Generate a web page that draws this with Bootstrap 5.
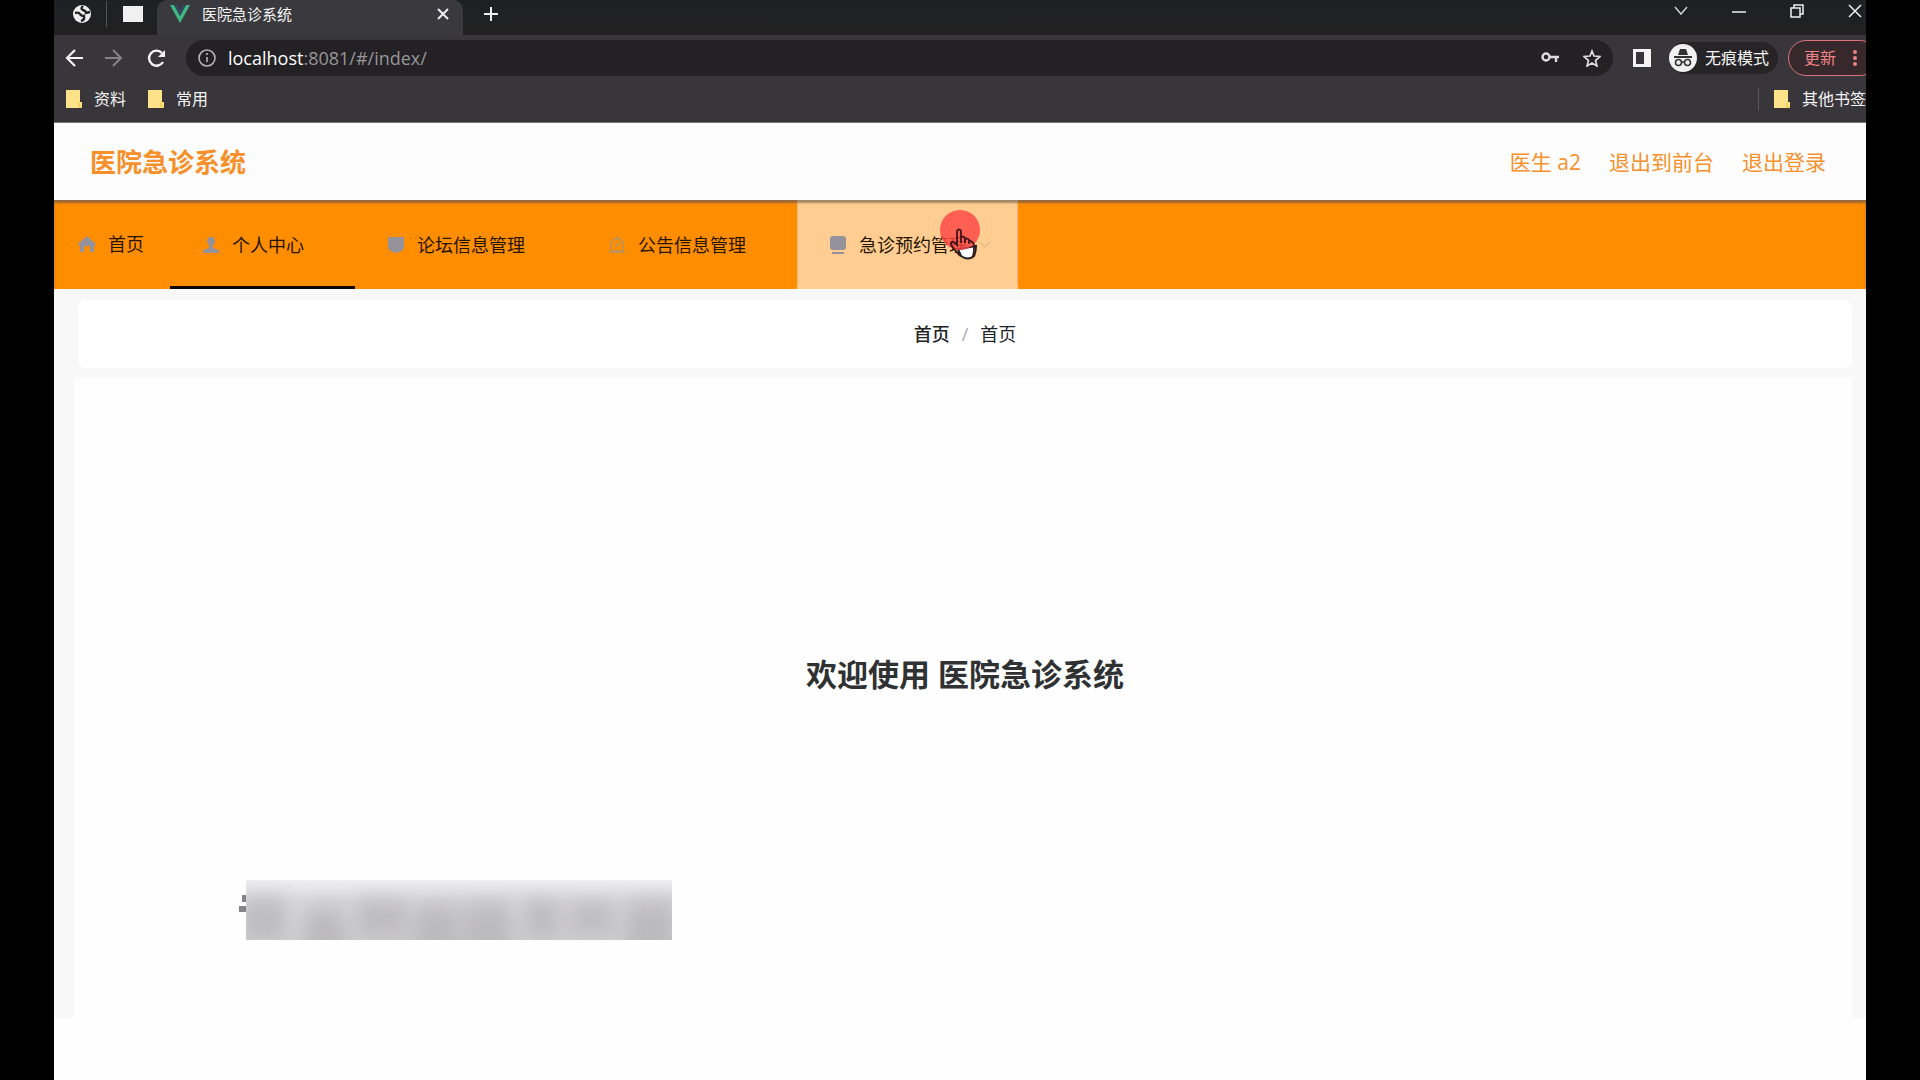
<!DOCTYPE html>
<html lang="zh-CN">
<head>
<meta charset="utf-8">
<meta name="viewport" content="width=device-width, initial-scale=1">
<title>医院急诊系统</title>
<link href="https://cdn.jsdelivr.net/npm/bootstrap@5.3.0/dist/css/bootstrap.min.css" rel="stylesheet">
<style>
body{background:#000;font-family:"Open Sans","Noto Sans CJK SC",sans-serif;font-size:18px;line-height:24px;color:#222}
a{text-decoration:none;color:inherit}
svg{display:block;flex:none}
button{background:none;border:0;padding:0;color:inherit}
.screen{margin:0 54px;background:#fefefe;min-height:100vh}
.chrome{background:#38363a;color:#f4f4f4;font-size:16px;line-height:20px;border-bottom:1px solid #777}
.tabs{height:35px;background:linear-gradient(#1d2123,#222021)}
.pinned{width:103px;padding-left:18px;padding-bottom:8px}
.pinned .rule{width:1px;height:26px;background:#555;margin:0 16px 0 14px}
.tab-on{width:306px;background:#3a393d;padding:0 14px 8px 13px;border-radius:10px 10px 0 0;font-size:15px}
.newtab{margin:0 0 8px 20px}
.winbtns{padding:0 4px 14px 0;gap:44px}
.toolbar{height:48px;padding:0 0 2px 11px;overflow:hidden}
.address{height:36px;border-radius:18px;background:#232124;padding:0 12px;margin-left:20px;font-size:18px}
.host{color:#fff;font-weight:500}.path{color:#98969a}
.incog{background:#262427;border-radius:18px;height:32px;width:109px;gap:8px;margin-left:18px}
.update{width:90px;height:36px;border:1px solid #d9747e;border-radius:18px;color:#ee8286;background:#37292b;padding:0 0 0 15px;margin:0 -12px 0 10px;gap:17px}
.marks{height:39px;padding:0 0 7px 12px}
.marks a{margin-right:22px}
.marks a:last-child{margin-right:0}
.marks .rule{width:1px;height:22px;background:#5a585c;margin-right:15px}
.topbar{height:77px;background:#fdfdfd;color:#f7902a;padding:0 40px 0 36px}
.brand-title{font-size:26px;line-height:32px;font-weight:700;margin:0}
.topbar nav{font-size:21px;line-height:28px;gap:28px}
.menu{height:89px;background:#ff8d00;box-shadow:inset 0 3px 2px #9a693a;color:#261500}
.menu a{padding:3px 27px 0 32px;gap:12px;border-bottom:3px solid transparent}
.menu a.home{padding:1px 26px 0 24px}
.menu a.active{border-color:#0d0500}
.menu a.hovered{background:#ffcd91;box-shadow:inset 0 3px 2px #a48867}
.menu .ic{fill:#96929b}
.pointer{position:absolute;left:139px;top:6px}
.content-area{background:#f8f8f8;padding:11px 14px 0 24px}
.crumbs{height:68px;background:#fff;border-radius:8px;--bs-breadcrumb-item-padding-x:12px;--bs-breadcrumb-divider-color:#aaa;margin:0}
.welcome{position:relative;background:#fefefe;height:641px;margin:9px 0 0 -4px}
.welcome h1{font-size:31px;line-height:40px;font-weight:700;color:#303133;margin:0;padding-top:277px;padding-left:4px}
.mosaic{position:absolute;left:165px;top:503px}
</style>
</head>
<body>
<div class="screen">
<header class="chrome">
  <div class="tabs d-flex">
    <div class="pinned d-flex align-items-center">
      <svg width="20" height="20" viewBox="0 0 20 20"><circle cx="10" cy="10" r="9" fill="#eee"/><path d="M3 9q4-1 5 1t4 2q1 4-3 5M11 2q-3 3 0 4t3 3l4-1" fill="none" stroke="#222" stroke-width="2.400"/></svg>
      <span class="rule"></span>
      <svg width="20" height="16"><rect width="20" height="16" fill="#f0f0f0"/></svg>
    </div>
    <div class="tab-on d-flex align-items-center">
      <svg width="20" height="18" viewBox="0 0 20 18"><path d="M0 0h4l6 11 6-11h4L10 18z" fill="#41b883"/><path d="M4 0h3l3 5 3-5h3l-6 11z" fill="#35495e"/></svg>
      <span class="ms-2 ps-1 flex-grow-1">医院急诊系统</span>
      <button type="button" aria-label="关闭标签页"><svg width="12" height="12" viewBox="0 0 12 12" stroke="#eee" stroke-width="2"><path d="M1 1l10 10M11 1L1 11"/></svg></button>
    </div>
    <button type="button" class="newtab" aria-label="新标签页"><svg width="16" height="16" viewBox="0 0 16 16" stroke="#eee" stroke-width="2"><path d="M8 1v14M1 8h14"/></svg></button>
    <div class="winbtns ms-auto d-flex align-items-center">
      <button type="button" aria-label="搜索标签页"><svg width="14" height="10" viewBox="0 0 14 10" fill="none" stroke="#ccc" stroke-width="1.5"><path d="M1 1l6 7 6-7"/></svg></button>
      <button type="button" aria-label="最小化"><svg width="14" height="14" stroke="#eee" stroke-width="1.5"><path d="M0 8h14"/></svg></button>
      <button type="button" aria-label="还原"><svg width="14" height="14" viewBox="0 0 14 14" fill="none" stroke="#eee" stroke-width="1.5"><path d="M1 4h9v9H1zM4 4V1h9v9h-3"/></svg></button>
      <button type="button" aria-label="关闭"><svg width="14" height="14" viewBox="0 0 14 14" stroke="#eee" stroke-width="1.5"><path d="M1 1l12 12M13 1L1 13"/></svg></button>
    </div>
  </div>
  <div class="toolbar d-flex align-items-center">
    <button type="button" aria-label="后退"><svg width="19" height="18" viewBox="0 0 19 18" fill="none" stroke="#f4f4f4" stroke-width="2.2"><path d="M18 9H2M10 1L2 9l8 8"/></svg></button>
    <button type="button" class="ms-3 ps-1" aria-label="前进"><svg width="19" height="18" viewBox="0 0 19 18" fill="none" stroke="#858387" stroke-width="2"><path d="M1 9h16M9 1l8 8-8 8"/></svg></button>
    <button type="button" class="ms-3 ps-2" aria-label="刷新"><svg width="19" height="19" viewBox="0 0 19 19" fill="none" stroke="#f4f4f4" stroke-width="2.4"><path d="M16 13a7.500 7.500 0 1 1-1-9"/><path d="M18 1v7h-7z" fill="#f4f4f4" stroke="none"/></svg></button>
    <div class="address flex-grow-1 d-flex align-items-center">
      <svg width="18" height="18" viewBox="0 0 18 18" fill="none" stroke="#b5b3b7" stroke-width="1.6"><circle cx="9" cy="9" r="8"/><path d="M9 8v5M9 4v2"/></svg>
      <a href="#/index/" class="ms-2 ps-1 me-auto"><span class="host">localhost</span><span class="path">:8081/#/index/</span></a>
      <button type="button" aria-label="密码"><svg width="18" height="12" viewBox="0 0 18 12" fill="none" stroke="#ddd" stroke-width="2.4"><circle cx="5" cy="5" r="3.500"/><path d="M8 5h10M15 5v5"/></svg></button>
      <button type="button" class="ms-4" aria-label="收藏"><svg width="18" height="18" viewBox="0 0 18 18" fill="none" stroke="#ddd" stroke-width="1.7"><path d="M9 2l2 5 6 .5-4.500 4L14 17l-5-3-5 3 1.500-5.500L1 7.500 7 7z"/></svg></button>
    </div>
    <button type="button" class="ms-3 ps-1" aria-label="侧边栏"><svg width="18" height="18"><path d="M0 0h18v18H0zM3 3v12h8V3z" fill="#f4f4f4" fill-rule="evenodd"/></svg></button>
    <div class="incog d-flex align-items-center">
      <svg width="28" height="28" viewBox="0 0 28 28"><circle cx="14" cy="14" r="14" fill="#f1f1f1"/><path d="M9 11l2-6h6l2 6zM5 12h18v2H5z" fill="#333"/><g fill="none" stroke="#333" stroke-width="1.600"><circle cx="9.500" cy="18.500" r="3"/><circle cx="18.500" cy="18.500" r="3"/><path d="M12 18h4"/></g></svg>
      <span>无痕模式</span>
    </div>
    <button type="button" class="update d-flex align-items-center">更新<svg width="4" height="18" fill="#ee8286"><circle cx="2" cy="3" r="2"/><circle cx="2" cy="9" r="2"/><circle cx="2" cy="15" r="2"/></svg></button>
  </div>
  <div class="marks d-flex align-items-center">
    <a href="#" class="d-flex align-items-center"><svg width="16" height="18"><path d="M0 0h14v12h2v6H0z" fill="#fde28a"/><path d="M13 12v5h3" fill="none" stroke="#e8c33c"/></svg><span class="ms-2 ps-1">资料</span></a>
    <a href="#" class="d-flex align-items-center me-auto"><svg width="16" height="18"><path d="M0 0h14v12h2v6H0z" fill="#fde28a"/><path d="M13 12v5h3" fill="none" stroke="#e8c33c"/></svg><span class="ms-2 ps-1">常用</span></a>
    <span class="rule"></span>
    <a href="#" class="d-flex align-items-center"><svg width="16" height="18"><path d="M0 0h14v12h2v6H0z" fill="#fde28a"/><path d="M13 12v5h3" fill="none" stroke="#e8c33c"/></svg><span class="ms-2 ps-1">其他书签</span></a>
  </div>
</header>
<div class="topbar d-flex align-items-center justify-content-between">
  <h2 class="brand-title">医院急诊系统</h2>
  <nav class="d-flex"><a href="#">医生 a2</a><a href="#">退出到前台</a><a href="#">退出登录</a></nav>
</div>
<nav class="menu d-flex">
  <a href="#" class="home d-flex align-items-center"><svg class="ic" width="18" height="18"><path d="M9 1l9 8-1 2-1-1v7h-4v-6H6v6H2v-7l-1 1-1-2z"/></svg>首页</a>
  <a href="#" class="active d-flex align-items-center"><svg class="ic" width="18" height="18"><circle cx="9" cy="5" r="4"/><path d="M7 8h4v4l6 2v3H1v-3l6-2z"/></svg>个人中心<svg width="12" height="8" fill="none" stroke="#fb920f"><path d="M1 1l5 5 5-5"/></svg></a>
  <a href="#" class="d-flex align-items-center"><svg class="ic" width="18" height="18"><path d="M1 1h16v10q0 4-8 6-8-2-8-6z"/></svg>论坛信息管理<svg width="12" height="8" fill="none" stroke="#fb8f08"><path d="M1 1l5 5 5-5"/></svg></a>
  <a href="#" class="d-flex align-items-center"><svg width="18" height="18" fill="none" stroke="#b8935f" stroke-width="1.500"><path d="M3 15V8q0-5 6-5t6 5v7zM1 16h16M9 3V0M7 8l2 2 3-4"/></svg>公告信息管理<svg width="12" height="8" fill="none" stroke="#fb8f08"><path d="M1 1l5 5 5-5"/></svg></a>
  <a href="#" class="hovered position-relative d-flex align-items-center"><svg class="ic" width="18" height="18"><rect x="1" width="16" height="14" rx="3"/><path d="M3 16h12v2H3z"/></svg>急诊预约管理<svg width="12" height="8" fill="none" stroke="#d9a87e"><path d="M1 1l5 5 5-5"/></svg>
    <svg class="pointer" width="46" height="56" viewBox="0 0 46 56"><path d="M22 43l18-3q0 6-2 10-6 5-13 0z" fill="#fff" stroke="#222" stroke-width="2"/><circle cx="24" cy="24" r="20" fill="#f44" fill-opacity=".8"/><path d="M24 50l-9-11q-1-4 3-3l3 3V25q2-3 4 0v12-6q3-1 4 1v5-4q3-1 4 1v4-3q4 0 5 4v4q0 6-2 9" fill="none" stroke="#42151a" stroke-width="1.800"/></svg></a>
</nav>
<main class="content-area">
  <ol class="crumbs breadcrumb align-items-center justify-content-center"><li class="breadcrumb-item"><a href="#" class="fw-medium">首页</a></li><li class="breadcrumb-item text-dark">首页</li></ol>
  <section class="welcome text-center">
    <h1>欢迎使用 医院急诊系统</h1>
    <svg class="mosaic" width="433" height="60" viewBox="0 0 433 60"><defs><linearGradient id="fade" x2="0" y2="1"><stop stop-color="#efeef0"/><stop offset=".35" stop-color="#d8d7d9"/><stop offset="1" stop-color="#cfced0"/></linearGradient><filter id="soft" x="-50%" y="-50%" width="200%" height="200%"><feGaussianBlur stdDeviation="9 11"/></filter><clipPath id="edge"><rect x="7" width="426" height="60"/></clipPath></defs><path d="M3 15h4v7H3zM0 26h7v6H0z" fill="#858486"/><g clip-path="url(#edge)"><rect x="7" width="426" height="60" fill="url(#fade)"/><g fill="#a5a3a6" fill-opacity=".5" filter="url(#soft)"><path d="M4 18h42v40H4zM66 28h40v46H66zM118 20h50v36h-50zM176 24h44v50h-44zM226 22h46v50h-46zM286 20h34v36h-34zM330 22h46v30h-46zM388 20h48v54h-48z"/></g></g></svg>
  </section>
</main>
</div>
<script src="https://cdn.jsdelivr.net/npm/bootstrap@5.3.0/dist/js/bootstrap.bundle.min.js"></script>
</body>
</html>
